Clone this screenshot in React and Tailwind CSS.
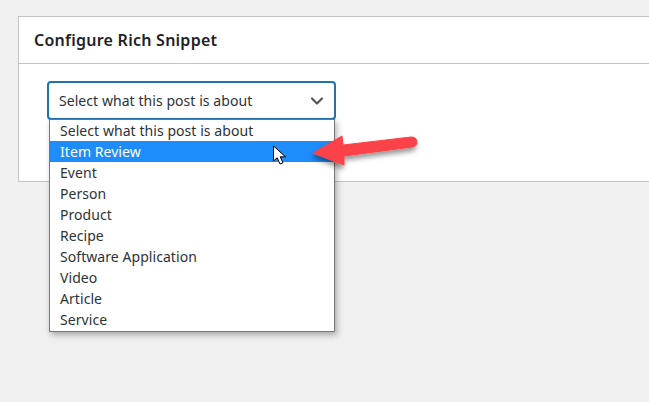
import { ChevronDown } from "lucide-react";

const options = [
  "Select what this post is about",
  "Item Review",
  "Event",
  "Person",
  "Product",
  "Recipe",
  "Software Application",
  "Video",
  "Article",
  "Service",
];

function Option({ label, active }) {
  return (
    <li className={`h-[21px] pl-[10px] text-[14px] leading-[21px] ${active ? "bg-[#1e8cfa] text-white" : "text-[#2c3338]"}`}>
      {label}
    </li>
  );
}

export default function App() {
  return (
    <div className="relative h-screen overflow-hidden bg-[#f0f0f1] pt-4 pl-[18px] font-['Noto_Sans',sans-serif] tracking-[0.06px]">
      <div className="h-[166px] border border-r-0 border-[#c3c4c7] bg-white">
        <div className="h-[47px] border-b border-[#c3c4c7] pl-[15px]">
          <h2 className="text-[16px] leading-[47px] font-semibold tracking-[0.25px] text-[#1d2327]">Configure Rich Snippet</h2>
        </div>
        <div className="pt-[17px] pl-[28px]">
          <div className="relative w-[289px]">
            <div className="flex h-[39px] items-center justify-between rounded-[4px] border-2 border-[#2271b1] pr-[7px] pl-[10px] text-[14px] text-[#2c3338]">
              <span>Select what this post is about</span>
              <ChevronDown className="h-[20px] w-[20px] text-[#50575e]" strokeWidth={2.6} />
            </div>
            <ul className="absolute top-[38px] left-[2px] w-[286px] border border-[#767676] bg-white pb-px shadow-[2px_3px_6px_rgba(0,0,0,0.3)]">
              {options.map((label) => (
                <Option key={label} label={label} active={label === "Item Review"} />
              ))}
            </ul>
          </div>
        </div>
      </div>

      {/* mouse cursor */}
      <svg className="absolute top-[145px] left-[272px]" width="16" height="21" viewBox="0 0 16 21">
        <path d="M1.5 1 L1.5 16 L5.2 12.8 L8 19 L11 17.8 L8.2 11.8 L13.5 11.8 Z" fill="#fff" stroke="#000" strokeWidth="1" strokeLinejoin="round" />
      </svg>

      {/* red annotation arrow */}
      <svg className="absolute top-[130px] left-[305px]" width="120" height="45" viewBox="0 0 120 45">
        <defs>
          <filter id="arrow-shadow" x="-20%" y="-40%" width="140%" height="200%">
            <feDropShadow dx="-1" dy="4" stdDeviation="2.5" floodColor="#000" floodOpacity="0.4" />
          </filter>
        </defs>
        <path
          d="M8 23 L37 6 L38 15 L106 7 Q112 7 112 12 Q112 16 107 17 L39 26 L39 35 Z"
          fill="#fb4248"
          stroke="#fb4248"
          strokeWidth="1"
          strokeLinejoin="round"
          filter="url(#arrow-shadow)"
        />
      </svg>
    </div>
  );
}
